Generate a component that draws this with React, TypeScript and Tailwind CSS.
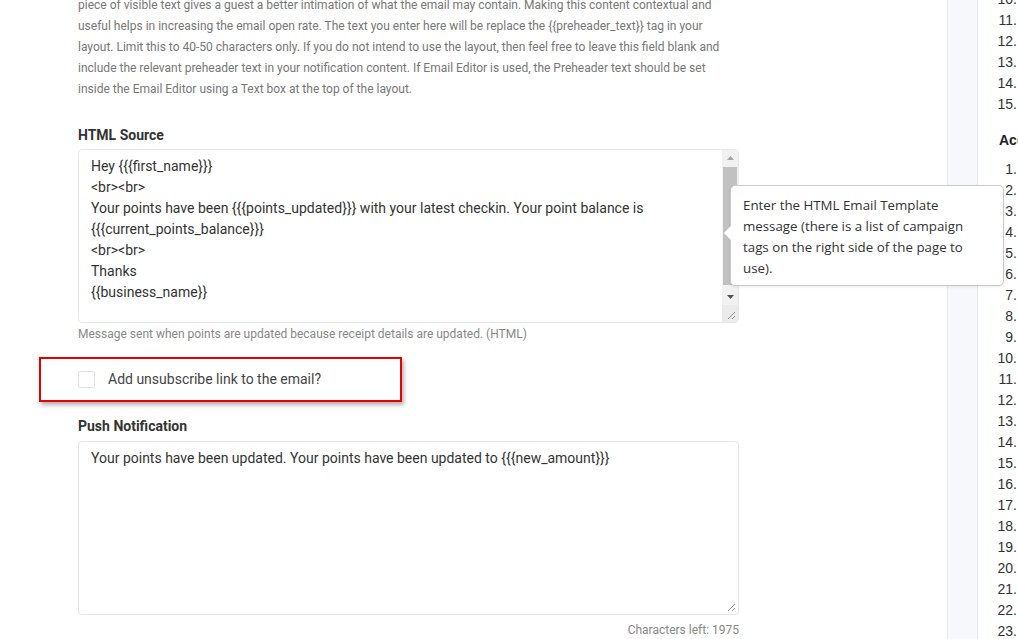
import React from 'react';

const descLines = [
   'piece of visible text gives a guest a better intimation of what the email may contain. Making this content contextual and',
   'useful helps in increasing the email open rate. The text you enter here will be replace the {{preheader_text}} tag in your',
   'layout. Limit this to 40-50 characters only. If you do not intend to use the layout, then feel free to leave this field blank and',
   'include the relevant preheader text in your notification content. If Email Editor is used, the Preheader text should be set',
   'inside the Email Editor using a Text box at the top of the layout.',
];

const htmlLines = [
   'Hey {{{first_name}}}',
   '<br><br>',
   'Your points have been {{{points_updated}}} with your latest checkin. Your point balance is',
   '{{{current_points_balance}}}',
   '<br><br>',
   'Thanks',
   '{{business_name}}',
];

const tipLines = ['Enter the HTML Email Template', 'message (there is a list of campaign', 'tags on the right side of the page to', 'use).'];

const ResizeGrip = () => (
   <svg width="9" height="9" viewBox="0 0 9 9" className="block">
      <path d="M8 1 L1 8 M8 5 L5 8" stroke="#8a8a8a" strokeWidth="1" fill="none" />
   </svg>
);

const FakeScrollbar = () => (
   <div className="flex w-[16px] flex-col bg-[#f1f1f1]">
      <div className="flex h-[16px] items-center justify-center">
         <svg width="7" height="4" viewBox="0 0 7 4">
            <path d="M0 4 L3.5 0 L7 4 Z" fill="#a3a3a3" />
         </svg>
      </div>
      <div className="flex-1 px-[1px] pt-[1px]">
         <div className="h-[118px] bg-[#c1c1c1]" />
      </div>
      <div className="flex h-[16px] items-center justify-center">
         <svg width="7" height="4" viewBox="0 0 7 4">
            <path d="M0 0 L7 0 L3.5 4 Z" fill="#505050" />
         </svg>
      </div>
      <div className="flex h-[17px] items-end justify-end bg-[#ebebeb] pb-[2px] pr-[2px]">
         <ResizeGrip />
      </div>
   </div>
);

const ListRow = ({n}: {n: string}) => (
   <div className="flex h-[21px] items-center">
      <span className="w-[39px] shrink-0 text-right">{n}</span>
      <span className="ml-1 whitespace-nowrap">Tag</span>
   </div>
);

const App = () => {
   const top = ['10.', '11.', '12.', '13.', '14.', '15.'];
   const acc = Array.from({length: 23}, (_, i) => `${i + 1}.`);

   return (
      <div className="relative flex h-[639px] w-[1018px] overflow-hidden bg-white font-['Roboto',sans-serif]">
         {/* main form column */}
         <div className="w-[739px] shrink-0 pl-[78px]">
            <div className="-mt-[5px] text-[12px] leading-[21px] text-[#777]">
               {descLines.map((l, i) => (
                  <div key={i} className="whitespace-nowrap">
                     {l}
                  </div>
               ))}
            </div>

            <div className="mt-[25px] text-[14px] font-bold leading-[20px] text-[#333]">HTML Source</div>
            <div className="mt-[4px] flex h-[174px] overflow-hidden rounded-[4px] border border-[#e3e7ed] bg-white">
               <div className="flex-1 px-3 pt-[6px] text-[14px] leading-[21px] text-[#333]">
                  {htmlLines.map((l, i) => (
                     <div key={i} className="whitespace-nowrap">
                        {l}
                     </div>
                  ))}
               </div>
               <FakeScrollbar />
            </div>
            <div className="mt-[2px] text-[12px] leading-[18px] text-[#888]">
               Message sent when points are updated because receipt details are updated. (HTML)
            </div>

            <div className="relative mt-[14px] flex h-[45px] items-center">
               <div className="absolute -left-[39px] top-0 h-[45px] w-[363px] border-2 border-[#e60000] shadow-[2px_3px_4px_rgba(0,0,0,0.3)]" />
               <span className="h-[17px] w-[17px] rounded-[2px] border border-[#dde2ea] bg-white" />
               <span className="ml-[13px] text-[14px] text-[#444]">Add unsubscribe link to the email?</span>
            </div>

            <div className="mt-[14px] text-[14px] font-bold leading-[20px] text-[#333]">Push Notification</div>
            <div className="relative mt-[5px] h-[174px] rounded-[4px] border border-[#e3e7ed] bg-white px-3 pt-[6px] text-[14px] leading-[21px] text-[#333]">
               Your points have been updated. Your points have been updated to {'{{{new_amount}}}'}
               <div className="absolute bottom-[2px] right-[2px]">
                  <ResizeGrip />
               </div>
            </div>
            <div className="mt-[6px] text-right text-[12px] leading-[18px] text-[#888]">Characters left: 1975</div>
         </div>

         <div className="flex-1" />

         {/* side strip */}
         <div className="w-[31px] shrink-0 border-x border-[#e3e8ef] bg-[#f6f8fb]" />

         {/* tag list column */}
         <div className="w-[40px] shrink-0 font-['Liberation_Sans',Arial,sans-serif] text-[14px] text-[#333]">
            <div className="-mt-[11px]">
               {top.map((n) => (
                  <ListRow key={n} n={n} />
               ))}
            </div>
            <div className="mt-[15px] h-[21px] whitespace-nowrap pl-[21px] font-bold leading-[21px] text-[#222]">Account</div>
            <div className="mt-[8px]">
               {acc.map((n) => (
                  <ListRow key={n} n={n} />
               ))}
            </div>
         </div>

         {/* tooltip */}
         <div className="absolute left-[730px] top-[185px] h-[101px] w-[274px] rounded-[5px] border border-[#c9c9c9] bg-white pl-3 pr-2 pt-[9px] font-['Open_Sans',sans-serif] text-[13.3px] leading-[21px] text-[#333] shadow-[0_1px_3px_rgba(0,0,0,0.08)]">
            <div className="absolute -left-[8px] top-[39px] h-0 w-0 border-y-[8px] border-r-[8px] border-y-transparent border-r-[#c9c9c9]" />
            <div className="absolute -left-[7px] top-[39px] h-0 w-0 border-y-[8px] border-r-[8px] border-y-transparent border-r-white" />
            {tipLines.map((l, i) => (
               <div key={i} className="whitespace-nowrap">
                  {l}
               </div>
            ))}
         </div>
      </div>
   );
};

export default App;
